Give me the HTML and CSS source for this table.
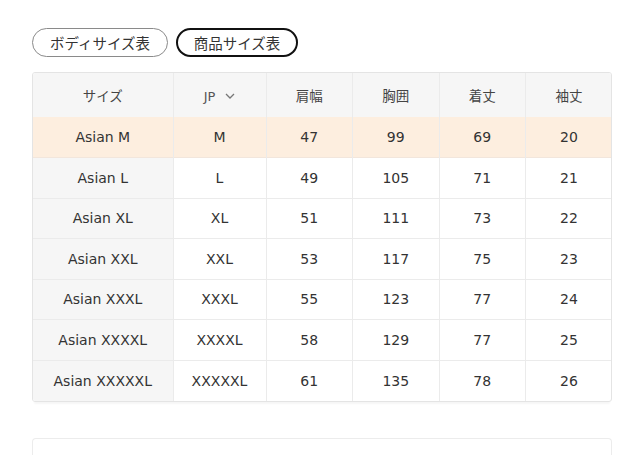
FILE: index.html
```html
<!DOCTYPE html>
<html lang="ja">
<head>
<meta charset="utf-8">
<link rel="stylesheet" href="styles.css">
</head>
<body>
<div class="page">
  <div class="tabs">
    <button class="tab">ボディサイズ表</button>
    <button class="tab tab-active">商品サイズ表</button>
  </div>
  <div class="table-wrap">
    <table class="size-table">
      <colgroup>
        <col class="c1"><col class="c2"><col class="c3"><col class="c3"><col class="c3"><col class="c3">
      </colgroup>
      <thead>
        <tr>
          <th>サイズ</th>
          <th><span class="jp">JP <svg class="chev" width="10" height="6" viewBox="0 0 10 6"><path d="M1 1 L5 5 L9 1" fill="none" stroke="#777" stroke-width="1.3"/></svg></span></th>
          <th>肩幅</th><th>胸囲</th><th>着丈</th><th>袖丈</th>
        </tr>
      </thead>
      <tbody>
        <tr class="hl"><td>Asian M</td><td>M</td><td>47</td><td>99</td><td>69</td><td>20</td></tr>
        <tr><td>Asian L</td><td>L</td><td>49</td><td>105</td><td>71</td><td>21</td></tr>
        <tr><td>Asian XL</td><td>XL</td><td>51</td><td>111</td><td>73</td><td>22</td></tr>
        <tr><td>Asian XXL</td><td>XXL</td><td>53</td><td>117</td><td>75</td><td>23</td></tr>
        <tr><td>Asian XXXL</td><td>XXXL</td><td>55</td><td>123</td><td>77</td><td>24</td></tr>
        <tr><td>Asian XXXXL</td><td>XXXXL</td><td>58</td><td>129</td><td>77</td><td>25</td></tr>
        <tr><td>Asian XXXXXL</td><td>XXXXXL</td><td>61</td><td>135</td><td>78</td><td>26</td></tr>
      </tbody>
    </table>
  </div>
  <div class="next-box"></div>
</div>
</body>
</html>
```
FILE: styles.css
```css
* { box-sizing: border-box; }
html { overflow: hidden; }
html, body { margin: 0; padding: 0; background: #fff; }
body {
  font-family: "DejaVu Sans", "Noto Sans CJK JP", sans-serif;
  color: #333;
  font-size: 14px;
  overflow: hidden;
  height: 455px;
}
.page { padding: 28px 28px 0 32px; width: 640px; }
.tabs { display: flex; gap: 8px; height: 29px; }
.tab {
  font-family: "Noto Sans CJK JP", sans-serif;
  font-size: 14.5px;
  color: #333;
  background: #fff;
  border: 1px solid #8a8a8a;
  border-radius: 15px;
  padding: 0 10px;
  height: 29px;
  line-height: 27px;
  width: 136px;
}
.tab-active {
  border: 2px solid #111;
  width: 122px;
  line-height: 25px;
}
.table-wrap {
  margin-top: 15px;
  width: 580px;
  border: 1px solid #e4e4e4;
  border-radius: 3px;
  box-shadow: 0 4px 2px -2px rgba(0,0,0,0.04);
  overflow: hidden;
}
.size-table {
  width: 100%;
  border-collapse: collapse;
  table-layout: fixed;
}
.c1 { width: 140px; }
.c2 { width: 93px; }
.c3 { width: 86.5px; }
.size-table th, .size-table td {
  text-align: center;
  font-weight: normal;
  border-left: 1px solid #ebebeb;
  border-top: 1px solid #ebebeb;
  padding: 0;
}
.size-table th:first-child, .size-table td:first-child { border-left: none; }
.size-table thead th {
  border-top: none;
  height: 44px;
  background: #f6f6f6;
  font-family: "Noto Sans CJK JP", sans-serif;
  font-size: 13.5px;
  color: #444;
}
.size-table td { height: 40.5px; }
.size-table td:first-child { background: #f6f6f6; }
.size-table tr.hl td { background: #fdeedf; border-top-color: #fdeedf; }
.size-table tr.hl + tr td { border-top-color: #f2e6dc; }
.jp { display: inline-flex; align-items: center; gap: 10px; color: #555; font-family: "DejaVu Sans", sans-serif; font-size: 13px; }
.chev { display: block; }
.next-box {
  margin-top: 36px;
  width: 580px;
  height: 18px;
  border: 1px solid #ececec;
  border-bottom: none;
  border-radius: 4px 4px 0 0;
}
```
